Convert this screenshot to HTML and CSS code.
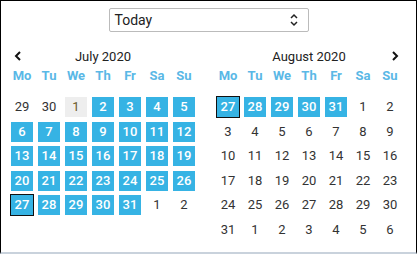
FILE: index.html
```html
<!DOCTYPE html>
<html>
<head>
  <meta charset="utf-8">
  <link rel="stylesheet" href="styles.css">
</head>
<body>
  <div class="frame">
    <div class="range-bar">
      <div class="range-select">
        <span>Today</span>
        <svg class="select-arrows" width="10" height="14" viewBox="0 0 10 14">
          <polyline points="2,5 5,2 8,5" fill="none" stroke="#222" stroke-width="1.5"/>
          <polyline points="2,9 5,12 8,9" fill="none" stroke="#222" stroke-width="1.5"/>
        </svg>
      </div>
    </div>

    <div class="months">
      <div class="month">
        <div class="month-head">
          <svg class="nav" width="8" height="10" viewBox="0 0 8 10">
            <polyline points="6,1 2,5 6,9" fill="none" stroke="#111" stroke-width="2"/>
          </svg>
          <div class="month-title">July 2020</div>
          <span></span>
        </div>
        <div class="weekdays">
          <div>Mo</div><div>Tu</div><div>We</div><div>Th</div><div>Fr</div><div>Sa</div><div>Su</div>
        </div>
        <div class="days">
          <div class="day">29</div>
          <div class="day">30</div>
          <div class="day today">1</div>
          <div class="day in-range">2</div>
          <div class="day in-range">3</div>
          <div class="day in-range">4</div>
          <div class="day in-range">5</div>
          <div class="day in-range">6</div>
          <div class="day in-range">7</div>
          <div class="day in-range">8</div>
          <div class="day in-range">9</div>
          <div class="day in-range">10</div>
          <div class="day in-range">11</div>
          <div class="day in-range">12</div>
          <div class="day in-range">13</div>
          <div class="day in-range">14</div>
          <div class="day in-range">15</div>
          <div class="day in-range">16</div>
          <div class="day in-range">17</div>
          <div class="day in-range">18</div>
          <div class="day in-range">19</div>
          <div class="day in-range">20</div>
          <div class="day in-range">21</div>
          <div class="day in-range">22</div>
          <div class="day in-range">23</div>
          <div class="day in-range">24</div>
          <div class="day in-range">25</div>
          <div class="day in-range">26</div>
          <div class="day in-range selected">27</div>
          <div class="day in-range">28</div>
          <div class="day in-range">29</div>
          <div class="day in-range">30</div>
          <div class="day in-range">31</div>
          <div class="day">1</div>
          <div class="day">2</div>
        </div>
      </div>

      <div class="month">
        <div class="month-head">
          <span></span>
          <div class="month-title">August 2020</div>
          <svg class="nav nav-next" width="8" height="10" viewBox="0 0 8 10">
            <polyline points="2,1 6,5 2,9" fill="none" stroke="#111" stroke-width="2"/>
          </svg>
        </div>
        <div class="weekdays">
          <div>Mo</div><div>Tu</div><div>We</div><div>Th</div><div>Fr</div><div>Sa</div><div>Su</div>
        </div>
        <div class="days">
          <div class="day in-range selected">27</div>
          <div class="day in-range">28</div>
          <div class="day in-range">29</div>
          <div class="day in-range">30</div>
          <div class="day in-range">31</div>
          <div class="day">1</div>
          <div class="day">2</div>
          <div class="day">3</div>
          <div class="day">4</div>
          <div class="day">5</div>
          <div class="day">6</div>
          <div class="day">7</div>
          <div class="day">8</div>
          <div class="day">9</div>
          <div class="day">10</div>
          <div class="day">11</div>
          <div class="day">12</div>
          <div class="day">13</div>
          <div class="day">14</div>
          <div class="day">15</div>
          <div class="day">16</div>
          <div class="day">17</div>
          <div class="day">18</div>
          <div class="day">19</div>
          <div class="day">20</div>
          <div class="day">21</div>
          <div class="day">22</div>
          <div class="day">23</div>
          <div class="day">24</div>
          <div class="day">25</div>
          <div class="day">26</div>
          <div class="day">27</div>
          <div class="day">28</div>
          <div class="day">29</div>
          <div class="day">30</div>
          <div class="day">31</div>
          <div class="day">1</div>
          <div class="day">2</div>
          <div class="day">3</div>
          <div class="day">4</div>
          <div class="day">5</div>
          <div class="day">6</div>
        </div>
      </div>
    </div>
  </div>
</body>
</html>
```

FILE: styles.css
```css
html, body {
  margin: 0;
  padding: 0;
  background: #fff;
}
body {
  width: 417px;
  height: 255px;
  font-family: Roboto, "Liberation Sans", sans-serif;
  font-size: 13px;
  color: #333;
}
.frame {
  box-sizing: border-box;
  width: 417px;
  height: 254px;
  border: 1px solid #000;
  border-bottom: 2px solid #c9d2dc;
  overflow: hidden;
}
.range-bar {
  display: flex;
  justify-content: center;
  padding-top: 7px;
}
.range-select {
  box-sizing: border-box;
  width: 200px;
  height: 24px;
  border: 1px solid #bbb;
  border-radius: 2px;
  display: flex;
  align-items: center;
  justify-content: space-between;
  padding: 0 9px 0 5px;
  font-size: 14px;
  color: #222;
}
.select-arrows {
  display: block;
}
.months {
  display: flex;
  gap: 22px;
  padding: 16px 0 0 10px;
}
.month {
  width: 184px;
}
.month-head {
  display: grid;
  grid-template-columns: 20px 1fr 20px;
  align-items: center;
  height: 16px;
}
.nav {
  display: block;
  margin-left: 3px;
}
.nav-next {
  margin-left: 10px;
}
.month-title {
  text-align: center;
  color: #222;
}
.weekdays,
.days {
  display: grid;
  grid-template-columns: repeat(7, 22px);
  column-gap: 5px;
}
.weekdays {
  margin-top: 4px;
  height: 16px;
  line-height: 16px;
  text-align: center;
  font-weight: bold;
  color: #5ab8e6;
}
.days {
  margin-top: 13px;
  row-gap: 4.5px;
}
.day {
  height: 20px;
  line-height: 20px;
  text-align: center;
}
.today {
  background: #eeeeee;
  color: #6b5a2a;
}
.in-range {
  background: #36b3e4;
  color: #fff;
  font-weight: 500;
}
.selected {
  outline: 1px solid #111;
}
```
